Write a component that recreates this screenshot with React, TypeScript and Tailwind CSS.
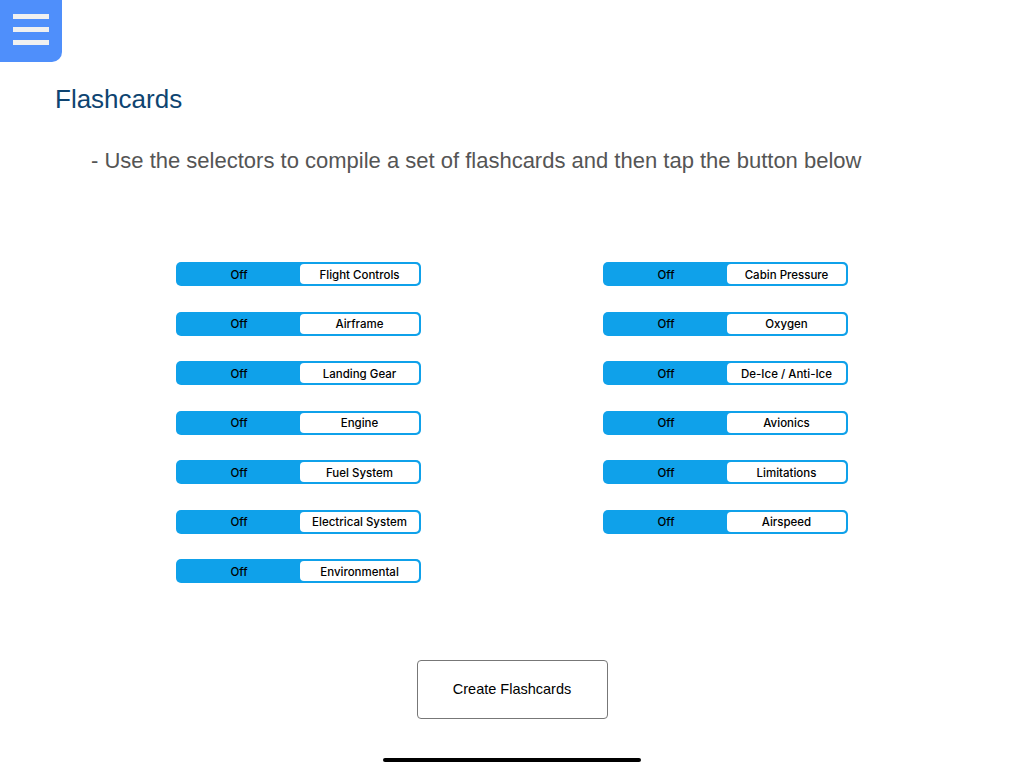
import React from "react";

const left = ["Flight Controls", "Airframe", "Landing Gear", "Engine", "Fuel System", "Electrical System", "Environmental"];
const right = ["Cabin Pressure", "Oxygen", "De-Ice / Anti-Ice", "Avionics", "Limitations", "Airspeed"];

function Seg({ label }: { label: string }) {
  return (
    <div
      className="flex h-[24px] w-[245px] rounded-[5px] bg-[#0fa1ea] p-[2px] text-[11.5px] font-medium leading-[20px] text-black"
      style={{ fontFamily: 'Inter, "Liberation Sans", sans-serif' }}
    >
      <div className="flex flex-1 items-center justify-center pt-[1px]">Off</div>
      <div className="flex w-[119px] items-center justify-center rounded-[4px] bg-white pt-[1px]">{label}</div>
    </div>
  );
}

export default function App() {
  return (
    <div className="relative h-[768px] w-[1024px] overflow-hidden bg-white" style={{ fontFamily: '"Liberation Sans", Arial, sans-serif' }}>
      <div className="flex h-[62px] w-[62px] flex-col items-center gap-[8px] rounded-br-[10px] bg-[#4f8ffb] pt-[14px]">
        <div className="h-[5px] w-[36px] bg-[#f0f0f0]" />
        <div className="h-[5px] w-[36px] bg-[#f0f0f0]" />
        <div className="h-[5px] w-[36px] bg-[#f0f0f0]" />
      </div>
      <h1 className="ml-[55px] mt-[21px] text-[26px] leading-[32px] text-[#0e4471]">Flashcards</h1>
      <p className="ml-[91px] mt-[33px] text-[22px] leading-[26px] text-[#555555]">
        - Use the selectors to compile a set of flashcards and then tap the button below
      </p>
      <div className="ml-[176px] mt-[88px] flex gap-[182px]">
        <div className="flex flex-col gap-[25.5px]">
          {left.map((l) => (
            <Seg key={l} label={l} />
          ))}
        </div>
        <div className="flex flex-col gap-[25.5px]">
          {right.map((l) => (
            <Seg key={l} label={l} />
          ))}
        </div>
      </div>
      <div className="mt-[77px] flex justify-center">
        <button className="h-[59px] w-[191px] rounded-[4px] border border-[#777777] bg-white text-[14.5px] text-black">Create Flashcards</button>
      </div>
      <div className="absolute bottom-[6px] left-[383px] h-[4px] w-[258px] rounded-full bg-black" />
    </div>
  );
}
